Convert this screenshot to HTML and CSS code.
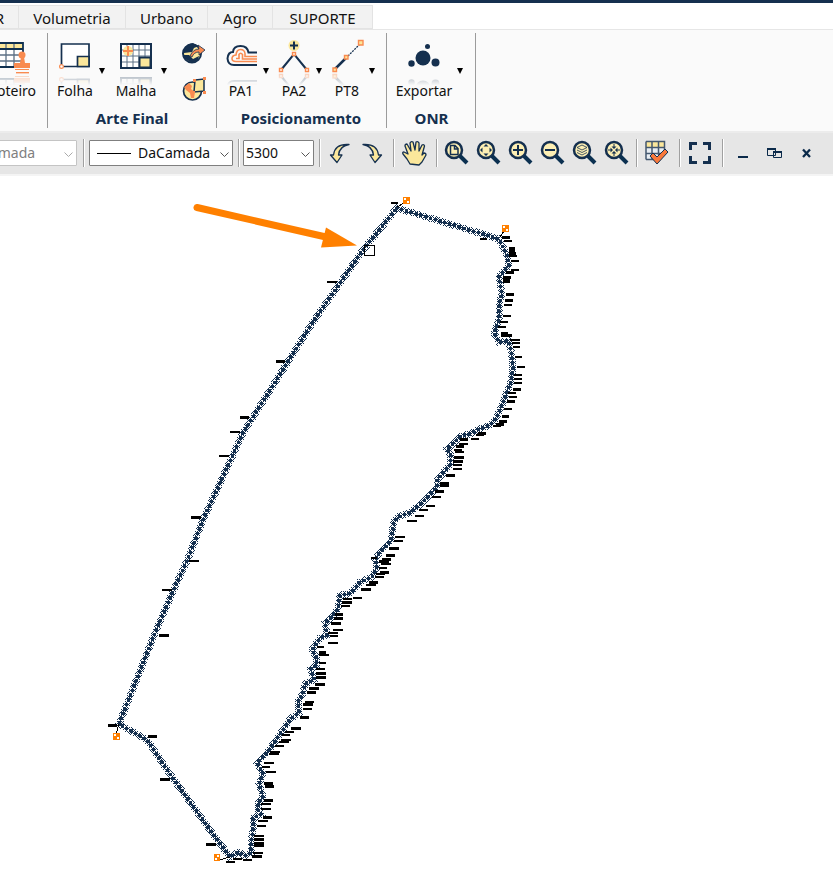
FILE: index.html
```
<!DOCTYPE html>
<html lang="pt-BR">
<head>
<meta charset="utf-8">
<meta name="viewport" content="width=device-width, initial-scale=1">
<title>Topografia</title>
<link rel="stylesheet" href="styles.css">
</head>
<body>
<header class="titlebar"></header>
<nav class="tabs">
  <a class="tab tab-cut" href="#">R</a>
  <a class="tab tab-volumetria" href="#">Volumetria</a>
  <a class="tab tab-urbano" href="#">Urbano</a>
  <a class="tab tab-agro" href="#">Agro</a>
  <a class="tab tab-suporte" href="#">SUPORTE</a>
</nav>

<section class="ribbon">
  <div class="group group-cut">
    <div class="tools">
      <button class="tool tool-cut">
        <svg class="icon" width="34" height="32" viewBox="-2 40 34 32"><path d="M-12 42h35v25h-35z" fill="#fff"/><path d="M-12 42h35v6h-35z" fill="#fbe79b"/><path d="M-12 54h35M-12 60h35M6 42v25M14 42v25M-3 42v25" stroke="#5c7085" stroke-width="1.3" fill="none"/><path d="M-12 42h35v24h-35M-12 48h35" stroke="#0f3050" stroke-width="1.8" fill="none"/><circle cx="22" cy="54" r="3.5" fill="#f98b50"/><path d="M21 56h3l1 6h5v5H14v-5h6zM15 68h14v1H15zM16 71h13v1H16z" fill="#f98b50"/></svg>
        <span>oteiro</span>
      </button>
    </div>
  </div>
  <div class="group group-arte">
    <div class="tools">
      <button class="tool tool-folha">
        <svg class="icon" width="34" height="32" viewBox="58 40 34 32"><path d="M61.5 43h27.500v22.500h-27.500z" fill="#fff" stroke="#15304f" stroke-width="1.7"/><path d="M77.500 55.500h11.500v10h-11.500z" fill="#fbe79b" stroke="#15304f" stroke-width="1.7"/><circle cx="61.500" cy="65.500" r="1.900" fill="#fff" stroke="#f98b50" stroke-width="1.200"/></svg>
        <span>Folha</span>
      </button>
      <button class="caret" aria-label="Opções de Folha"></button>
      <button class="tool tool-malha">
        <svg class="icon" width="34" height="32" viewBox="119 40 34 32"><path d="M121 43h30v24h-30z" fill="#fff"/><path d="M127 43v24M133 43v24M139 43v24M145 43v24M121 49h30M121 55h30M121 61h30" stroke="#5c7085"/><circle cx="128" cy="50" r="5" fill="#fbe79b"/><path d="M123 50h10M128 45v10" stroke="#f98b50" stroke-width="2"/><path d="M139.500 56.500h11v10h-11z" fill="#fbe79b" stroke="#15304f" stroke-width="2"/><path d="M121 43h30v24h-30z" fill="none" stroke="#15304f" stroke-width="2"/></svg>
        <span>Malha</span>
      </button>
      <button class="caret" aria-label="Opções de Malha"></button>
      <div class="small-tools">
        <button aria-label="Exportar globo"><svg width="26" height="24" viewBox="181 41 26 24"><circle cx="192" cy="53.500" r="9" fill="#fbe79b" stroke="#15304f" stroke-width="2"/><path d="M184 49q3-6 9-6l6 3-5 2-2 4-8 1zM183 55l6 0 4 4 6-3-1 4-6 3-5-3-3-1z" fill="#15304f"/><path d="M190 56q3-7 9-7l-1-4 7 5-6 5v-3q-5 0-7 5z" fill="#f98b50" stroke="#15304f" stroke-width=".8"/></svg></button>
        <button aria-label="Área no globo"><svg width="26" height="26" viewBox="181 76 26 26"><circle cx="192.500" cy="91" r="9" fill="#fbe79b" stroke="#15304f" stroke-width="1.700"/><path d="M184 87l5-4 3 3-1 3 4 3-1 6-3 0-1-5-4-3z" fill="#f98b50"/><path d="M195 80l9-1v12l-10 1z" fill="#fbe79b" stroke="#15304f" stroke-width="1.500"/><path d="M193 79h3v3h-3zM203 77h3v3h-3zM192 91h3v2h-3zM203 91h3v3h-3z" fill="#f98b50"/></svg></button>
      </div>
    </div>
    <h2>Arte Final</h2>
  </div>
  <div class="group group-pos">
    <div class="tools">
      <button class="tool tool-p">
        <svg class="icon" width="32" height="32" viewBox="225 40 32 32"><path d="M257 51.500h-8.500q-1-6.500-8-6.500t-7.500 6q-5 0-5.500 6.500.5 6.500 6.500 6.500h23" fill="none" stroke="#15304f" stroke-width="2"/><path d="M257 55.500h-12v-3q-.5-4-4.500-4t-4.500 5.500q-4 .5-4 3.500t4 3h21M257 58h-14.500v-4.500q-2-2.500-3.500 0v4h-3" fill="none" stroke="#f98b50" stroke-width="1.600"/></svg>
        <span>PA1</span>
      </button>
      <button class="caret" aria-label="Opções de PA1"></button>
      <button class="tool tool-p">
        <svg class="icon" width="34" height="34" viewBox="278 38 34 34"><path d="M282 69l13-16 13 16" fill="none" stroke="#15304f" stroke-width="2"/><circle cx="295" cy="44.500" r="5.500" fill="#fbe79b"/><path d="M291 44.500h8M295 40.500v8" stroke="#15304f" stroke-width="2"/><path d="M293.500 51.500h3v3h-3zM280.500 67.500h3v3h-3zM306.500 67.500h3v3h-3z" fill="#fff" stroke="#f98b50" stroke-width="1.400"/></svg>
        <span>PA2</span>
      </button>
      <button class="caret" aria-label="Opções de PA2"></button>
      <button class="tool tool-p">
        <svg class="icon" width="34" height="34" viewBox="330 38 34 34"><path d="M335 68l12-12" stroke="#15304f" stroke-width="2.500"/><path d="M348 55l12-12" stroke="#15304f" stroke-width="1.300" stroke-dasharray="2 1"/><path d="M358.500 39.500h4.500v4.500h-4.500zM344.500 54.500h3.500v3.500h-3.500zM333 67h3.500v3.500h-3.500z" fill="#fbe79b" stroke="#f98b50" stroke-width="1.400"/></svg>
        <span>PT8</span>
      </button>
      <button class="caret" aria-label="Opções de PT8"></button>
    </div>
    <h2>Posicionamento</h2>
  </div>
  <div class="group group-onr">
    <div class="tools">
      <button class="tool tool-exportar">
        <svg class="icon" width="34" height="32" viewBox="407 40 34 32"><g fill="#15304f"><circle cx="423" cy="57" r="7.500"/><circle cx="427.500" cy="45.500" r="2.500"/><circle cx="411.500" cy="62.500" r="3.200"/><circle cx="435.500" cy="61.500" r="4"/></g></svg>
        <span>Exportar</span>
      </button>
      <button class="caret" aria-label="Opções de Exportar"></button>
    </div>
    <h2>ONR</h2>
  </div>
</section>

<section class="toolbar">
  <div class="combo combo-cut"><select disabled aria-label="Cor"><option>DaCamada</option></select><svg width="9" height="5" viewBox="0 0 9 5"><path d="M.5.5l4 4 4-4"/></svg></div>
  <i class="sep"></i>
  <div class="combo combo-line"><select aria-label="Tipo de linha"><option>DaCamada</option></select><svg width="9" height="5" viewBox="0 0 9 5"><path d="M.5.5l4 4 4-4"/></svg></div>
  <i class="sep"></i>
  <div class="combo combo-scale"><select aria-label="Escala"><option>5300</option></select><svg width="9" height="5" viewBox="0 0 9 5"><path d="M.5.5l4 4 4-4"/></svg></div>
  <i class="sep"></i>
  <div class="icons icons-history">
    <button aria-label="Desfazer"><svg width="26" height="26" viewBox="327 140 26 26"><path d="M349 144.500q-14-1-15.500 10.500h-3l6.500 7.500 5-7.500h-3.500q1-9 10.500-10.500z" class="yellow"/></svg></button>
    <button aria-label="Refazer"><svg width="26" height="26" viewBox="359 140 26 26"><path d="M363 144.500q14-1 15.500 10.500h3l-6.500 7.500-5-7.500h3.500q-1-9-10.500-10.500z" class="yellow"/></svg></button>
  </div>
  <i class="sep"></i>
  <div class="icons icons-one">
    <button aria-label="Mover"><svg width="26" height="26" viewBox="401 140 26 26"><path d="M410 164l-3-5-4-5q-1-2 1-2l4 2-3-8q0-2 2-2l4 7-1-8q1-2 3-1l2 8 1-8q2-1 3 1v8l3-6q2-1 2.500 1l-2.500 9 2-2q2 0 2 2l-4 7-3 3z" class="yellow"/></svg></button>
  </div>
  <i class="sep"></i>
  <div class="icons icons-zoom">
    <button aria-label="Zoom página"><svg width="26" height="26" viewBox="0 0 26 26"><circle cx="10" cy="10" r="8" class="lens"/><path d="M16 16l7 7" class="handle"/><path d="M6.500 5.500h4.500l3 3v6h-7.500zM10.500 6v3h3.500" class="mark thin"/></svg></button>
    <button aria-label="Zoom extensão"><svg width="26" height="26" viewBox="0 0 26 26"><circle cx="10" cy="10" r="8" class="lens"/><path d="M16 16l7 7" class="handle"/><path d="M10 4l2.500 2.500h-5zM10 16l2.500-2.500h-5zM4 10l2.500-2.500v5zM16 10l-2.500-2.500v5z" fill="#15304f"/></svg></button>
    <button aria-label="Aumentar zoom"><svg width="26" height="26" viewBox="0 0 26 26"><circle cx="10" cy="10" r="8" class="lens"/><path d="M16 16l7 7" class="handle"/><path d="M5 10h10M10 5v10" class="mark"/></svg></button>
    <button aria-label="Diminuir zoom"><svg width="26" height="26" viewBox="0 0 26 26"><circle cx="10" cy="10" r="8" class="lens"/><path d="M16 16l7 7" class="handle"/><path d="M5 10h10" class="mark"/></svg></button>
    <button aria-label="Zoom camada"><svg width="26" height="26" viewBox="0 0 26 26"><circle cx="10" cy="10" r="8" class="lens"/><path d="M16 16l7 7" class="handle"/><path d="M5 7.500l5-2.500 5 2.500-5 2.500zM5 10l5 2.500 5-2.500M5 12.500l5 2.500 5-2.500" fill="none" stroke="#15304f" stroke-width=".8"/></svg></button>
    <button aria-label="Zoom centro"><svg width="26" height="26" viewBox="0 0 26 26"><circle cx="10" cy="10" r="8" class="lens"/><path d="M16 16l7 7" class="handle"/><path d="M10 9L7.500 6.500h5zM10 11l-2.500 2.500h5zM9 10L6.500 7.500v5zM11 10l2.500-2.500v5z" fill="#15304f"/><path d="M10 4v3M10 13v3M4 10h3M13 10h3" stroke="#15304f"/></svg></button>
  </div>
  <i class="sep"></i>
  <div class="icons icons-one">
    <button aria-label="Verificar tabela"><svg width="26" height="26" viewBox="645 140 26 26"><path d="M647 142h18v17h-18z" fill="#e9eef3"/><path d="M647 142h18v5h-18z" fill="#fbe79b"/><path d="M647 141.500h18.500V155M647 147.500h18M647 153.500h18M647 159.500h8M647 141.500v18M653 141.500v18M659.500 141.500V155" fill="none" stroke="#44586f" stroke-width="1.500"/><path d="M651 156l3-3 4 4 8-8 3 3-11 12z" fill="#f9783a" stroke="#15304f"/></svg></button>
  </div>
  <i class="sep"></i>
  <div class="icons icons-one">
    <button aria-label="Tela cheia"><svg width="26" height="26" viewBox="687 140 26 26"><path d="M697 143.500h-6.500v6.500M703 143.500h6.500v6.500M690.500 156v6.500h6.500M709.500 156v6.500h-6.500" fill="none" stroke="#15304f" stroke-width="3"/></svg></button>
  </div>
  <i class="sep"></i>
  <div class="icons icons-window">
    <button aria-label="Minimizar"><svg width="16" height="26" viewBox="734 140 16 26"><path d="M737 157h10" stroke="#0b2a4a" stroke-width="2"/></svg></button>
    <button aria-label="Restaurar"><svg width="18" height="26" viewBox="765 140 18 26"><path d="M766.500 148.500h8v7h-8zM772.500 151.500h8v6h-8z" fill="#e6e6e6" stroke="#0b2a4a"/><path d="M766 149h9M772 152h9" stroke="#0b2a4a" stroke-width="2"/></svg></button>
    <button aria-label="Fechar"><svg width="16" height="26" viewBox="799 140 16 26"><path d="M803 149.500l7 7.500M810 149.500l-7 7.500" stroke="#0b2a4a" stroke-width="2.300"/></svg></button>
  </div>
</section>

<main class="drawing">
  <svg viewBox="0 176 833 712" preserveAspectRatio="xMinYMin meet" role="img" aria-label="Perímetro do imóvel">
    <defs>
      <pattern id="hatch" width="4" height="4" patternUnits="userSpaceOnUse"><path d="M0 0h1v1h-1zM1 1h1v1h-1zM3 1h1v1h-1zM2 2h1v1h-1zM1 3h1v1h-1zM3 3h1v1h-1z" fill="#15304f"/></pattern>
      <path id="limit" d="M397 208L499 239 507 255 509 265 499 277 502 293 499 305 499 320 494 333 499 342 508 341 511 349 513 368 511 382 507 392 502 405 497 417 490 425 479 429 470 434 461 436 447 449 451 456 450 465 437 480 437 487 423 502 411 512 398 517 394 522 392 533 391 541 379 553 375 560 377 568 372 577 360 582 353 591 348 594 340 595 338 609 332 617 325 623 327 635 320 638 312 650 316 657 317 665 311 669 314 680 305 684 303 693 298 702 299 713 290 719 283 730 267 753 257 763 263 773 259 784 263 797 258 803 258 810 261 814 253 818 253 830 251 843 251 853 244 856 239 852 230 857 215 837 172 777 147 740 119 724 155 633 174 589 187 561 203 520 243 433 313 322 363 250Z"/>
    </defs>
    <use href="#limit" class="limit-hatch"/>
    <use href="#limit" class="limit-dots"/>
    <path class="leaders" d="M397 207l7-4M500 237l4-6M119 724l-3 10M230 857l-11 3"/>
    <path class="ticks" d="M391 203h7M480 239h7M504 241h8M509 256h8M511 261h8M511 270h8M504 305h8M503 316h8M500 322h8M498 327h8M510 340h10M512 343h8M513 347h7M515 357h7M517 367h8M514 375h8M514 379h8M514 383h8M508 393h8M509 397h8M504 409h8M493 426h8M476 435h8M471 439h8M459 444h9M454 450h8M455 452h9M453 465h9M453 469h9M432 497h9M426 506h9M419 510h9M415 516h9M407 521h10M395 537h10M394 541h9M381 564h10M371 558h6M379 568h8M376 574h9M375 577h9M366 585h10M353 598h9M343 599h9M341 606h9M333 630h10M328 633h10M330 636h8M328 643h10M317 647h7M319 655h10M319 663h7M316 669h9M305 702h9M303 709h9M285 732h9M282 735h8M281 740h10M279 742h10M275 746h9M270 752h10M269 754h10M264 763h10M262 767h8M266 772h10M261 804h10M261 809h10M258 821h10M257 826h9M254 836h10M253 853h10M243 860h9M226 862h9M233 859h9M189 561h10M162 590h10M327 282h10M230 432h10M219 456h10"/>
    <path class="ticks heavy" d="M502 237h8M506 272h8M506 294h8M505 300h8M501 335h11M501 333h7M513 389h8M507 401h8M502 416h7M499 421h8M496 424h8M478 433h8M460 439h8M456 446h8M454 457h10M453 461h10M446 475h9M440 483h9M440 485h9M435 491h9M389 548h10M386 555h9M382 559h9M379 561h10M380 572h9M369 582h9M361 589h10M342 602h10M335 614h8M334 618h9M331 623h10M319 652h7M316 673h10M316 677h10M315 684h10M309 688h10M307 692h9M303 704h10M300 717h9M291 728h10M264 783h9M265 786h9M264 800h9M263 817h9M254 839h10M254 843h10M254 845h10M252 856h10M206 844h10M191 517h10M159 635h10M108 725h9M148 736h9M160 779h10M276 361h9M240 417h9"/>
    <path d="M509 247h6l1 10h-7zM503 276h8l-1 7h-7z"/>
    <g class="markers">
      <path d="M403 197h7v7h-7zM502 225h7v7h-7zM113 733h7v7h-7zM214 854h6v7h-6z"/>
      <path class="holes" d="M404 198h2v2h-2zM407 201h2v2h-2zM503 226h2v2h-2zM506 229h2v2h-2zM114 734h2v2h-2zM117 737h2v2h-2zM217 855h2v2h-2zM215 858h2v2h-2z"/>
    </g>
    <path class="pick" d="M364.500 245.500h10v10h-10z"/>
    <path d="M197 207.500L326 237" class="arrow-line"/>
    <path d="M326 227.500L357 245.500 321 247.500z" class="arrow-head"/>
  </svg>
</main>
</body>
</html>
```
FILE: styles.css
```
* { box-sizing: border-box; }

body {
  margin: 0;
  min-height: 100vh;
  display: flex;
  flex-direction: column;
  overflow-x: hidden;
  background: #fff;
  color: #111;
  font-family: "Noto Sans", "Open Sans", sans-serif;
  font-size: 14px;
}

button {
  margin: 0;
  padding: 0;
  border: 0;
  background: none;
  color: inherit;
  font: inherit;
}

svg { display: block; }

.titlebar { height: 3px; background: #15304f; }

.tabs {
  display: flex;
  height: 27px;
  padding-top: 2px;
  border-bottom: 1px solid #e6e6e6;
}

.tab {
  border: 1px solid #e3e3e3;
  border-left: 0;
  background: #f2f2f2;
  color: #111;
  font-size: 15px;
  line-height: 25px;
  text-align: center;
  text-decoration: none;
}

.tab-cut { width: 19px; direction: rtl; padding-right: 14px; }
.tab-volumetria { width: 107px; }
.tab-urbano { width: 82px; }
.tab-agro { width: 65px; }
.tab-suporte { width: 100px; }

.ribbon {
  display: flex;
  height: 101px;
  padding: 3px 0;
  background: #fafafa;
}

.group {
  display: flex;
  flex-direction: column;
  justify-content: space-between;
  border-right: 1px solid #9b9b9b;
}

.group-cut { width: 48px; }
.group-arte { width: 169px; padding-left: 6px; }
.group-pos { width: 170px; padding-left: 5px; }
.group-onr { width: 89px; padding-left: 7px; }

.group h2 {
  margin: 0 0 0 -6px;
  color: #15304f;
  font-size: 15px;
  line-height: 20px;
  text-align: center;
}

.tools { display: flex; padding-top: 5px; }

.tool {
  display: flex;
  flex-direction: column;
  align-items: center;
  justify-content: flex-end;
  height: 62px;
  line-height: 18px;
  white-space: nowrap;
}

.tool .icon {
  margin-bottom: 9px;
  -webkit-box-reflect: below 0 linear-gradient(transparent 62%, rgba(0, 0, 0, 0.4));
}

.tool span { position: relative; }

.tool-cut { width: 36px; align-items: flex-end; }
.tool-cut .icon { margin-right: 4px; }
.tool-folha { width: 42px; }
.tool-malha { width: 44px; margin-left: 7px; }
.tool-p { width: 38px; }
.caret + .tool-p { margin-left: 4px; }
.tool-exportar { width: 60px; }

.caret { width: 11px; height: 62px; }

.caret::before {
  content: "";
  display: block;
  width: 0;
  margin: 4px auto 0;
  border: 3px solid transparent;
  border-top: 6px solid #000;
  border-bottom: 0;
}

.small-tools {
  display: flex;
  flex-direction: column;
  gap: 11px;
  margin: 3px 0 0 12px;
}

.toolbar {
  display: flex;
  align-items: center;
  height: 45px;
  padding-bottom: 2px;
  border-top: 2px solid #ececec;
  border-bottom: 2px solid #f4f4f4;
  background: #e6e6e6;
}

.sep {
  flex: none;
  width: 2px;
  height: 28px;
  border-left: 1px solid #a0a0a0;
  background: #fff;
}

.combo {
  position: relative;
  flex: none;
  height: 26px;
}

.combo select {
  width: 100%;
  height: 100%;
  margin: 0;
  border: 1px solid #7f7f7f;
  border-radius: 1px;
  background-color: #fff;
  color: #111;
  font: 14px "Noto Sans", sans-serif;
  appearance: none;
}

.combo svg {
  position: absolute;
  top: 12px;
  right: 4px;
  fill: none;
  stroke: #555;
  pointer-events: none;
}

.combo-cut { width: 144px; margin: 0 6px 0 -67px; }
.combo-cut select { padding-left: 29px; border-color: #c4c4c4; color: #808080; opacity: 1; }
.combo-cut svg { stroke: #aaa; }
.combo-line { width: 144px; margin: 0 5px 0 4px; }
.combo-line select {
  padding-left: 48px;
  background-image: linear-gradient(#000, #000);
  background-position: 7px 12px;
  background-size: 34px 1px;
  background-repeat: no-repeat;
}
.combo-scale { width: 71px; margin: 0 5px 0 3px; }
.combo-scale select { padding-left: 2px; }

.icons { display: flex; flex: none; gap: 6px; }
.icons-history { margin: 0 8px 0 6px; }
.icons-one { margin: 0 9px 0 6px; }
.icons-zoom { margin: 0 6px; }
.icons-window { gap: 15px; margin-left: 11px; }

.yellow { fill: #fbe79b; stroke: #15304f; stroke-width: 1.3; stroke-linejoin: round; }
.lens { fill: #fdefb4; stroke: #15304f; stroke-width: 2.5; }
.handle { fill: none; stroke: #0b3050; stroke-width: 4; }
.mark { fill: none; stroke: #15304f; stroke-width: 2; }
.thin { stroke-width: 1.5; }

.drawing { flex: 1; min-height: 0; }
.drawing svg { width: 100%; height: auto; shape-rendering: crispEdges; }
.limit-hatch { fill: none; stroke: url(#hatch); stroke-width: 7; }
.limit-dots { fill: none; stroke: #15304f; stroke-width: 4; stroke-linecap: round; stroke-dasharray: 0 5; }
.leaders { fill: none; stroke: #000; }
.ticks { fill: none; stroke: #000; stroke-width: 2; }
.heavy { stroke-width: 3; }
.markers { fill: #ff8000; }
.holes { fill: #fff; }
.pick { fill: none; stroke: #000; }
.arrow-line { stroke: #ff8000; stroke-width: 7; stroke-linecap: round; shape-rendering: auto; }
.arrow-head { fill: #ff8000; shape-rendering: auto; }
```
